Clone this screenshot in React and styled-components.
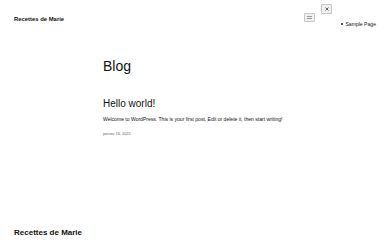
import { createGlobalStyle, styled } from 'styled-components'

const GlobalStyle = createGlobalStyle`
	html, body {
		margin: 0;
		padding: 0;
		background: #fff;
		color: #111;
		font-family: "Liberation Sans", Arial, sans-serif;
	}
`

const Page = styled.div`
	width: 390px;
	height: 240px;
	display: flex;
	flex-direction: column;
	overflow: hidden;
`

const Header = styled.header`
	display: flex;
	justify-content: space-between;
	align-items: flex-start;
	padding: 15px 14px 0 14px;
	height: 40px;
	box-sizing: border-box;
`

const SiteTitle = styled.div`
	font-size: 5.9px;
	font-weight: 700;
	margin-top: 1px;
`

const Nav = styled.nav`
	position: relative;
	display: flex;
	align-items: flex-start;
`

const IconButton = styled.button`
	display: flex;
	align-items: center;
	justify-content: center;
	width: ${({ $w }) => $w}px;
	height: ${({ $h }) => $h}px;
	padding: 0;
	border: 1px solid #c8c8c8;
	border-radius: 1px;
	background: #f0f0f0;
`

const MenuButton = styled(IconButton)`
	margin-top: -2px;
	margin-right: 26px;
`

const CloseButton = styled(IconButton)`
	position: absolute;
	left: 17px;
	top: -11px;
`

const Menu = styled.ul`
	list-style: none;
	margin: 6px 0 0 0;
	padding: 0;
	font-size: 5.1px;
	display: flex;
	align-items: center;
	gap: 2.5px;
	&::before {
		content: '';
		width: 1.5px;
		height: 1.5px;
		border-radius: 50%;
		background: #333;
	}
`

const Main = styled.main`
	padding-left: 103px;
	flex: 1;
`

const PageTitle = styled.h1`
	font-size: 14px;
	font-weight: 400;
	margin: 19px 0 0 0;
	line-height: 1;
`

const PostTitle = styled.h2`
	font-size: 10px;
	font-weight: 400;
	margin: 26px 0 0 0;
	line-height: 1;
`

const Excerpt = styled.p`
	font-size: 5.05px;
	margin: 8px 0 0 0;
	line-height: 1;
`

const PostDate = styled.div`
	font-size: 3.9px;
	color: #666;
	margin-top: 9px;
`

const Footer = styled.footer`
	padding: 0 0 3px 14px;
	font-size: 8px;
	font-weight: 700;
`

export default function App() {
	return (
		<Page>
			<GlobalStyle />
			<Header>
				<SiteTitle>Recettes de Marie</SiteTitle>
				<Nav>
					<MenuButton $w={11} $h={9} aria-label="menu">
						<svg width="5" height="3" viewBox="0 0 5 3">
							<path d="M0 0.5h5M0 2.5h5" stroke="#444" strokeWidth="0.5" />
						</svg>
					</MenuButton>
					<CloseButton $w={11} $h={10} aria-label="close">
						<svg width="4" height="4" viewBox="0 0 4 4">
							<path d="M0.5 0.5l3 3M3.5 0.5l-3 3" stroke="#222" strokeWidth="0.7" />
						</svg>
					</CloseButton>
					<Menu>
						<li>Sample Page</li>
					</Menu>
				</Nav>
			</Header>
			<Main>
				<PageTitle>Blog</PageTitle>
				<PostTitle>Hello world!</PostTitle>
				<Excerpt>Welcome to WordPress. This is your first post. Edit or delete it, then start writing!</Excerpt>
				<PostDate>janvier 16, 2025</PostDate>
			</Main>
			<Footer>Recettes de Marie</Footer>
		</Page>
	)
}
